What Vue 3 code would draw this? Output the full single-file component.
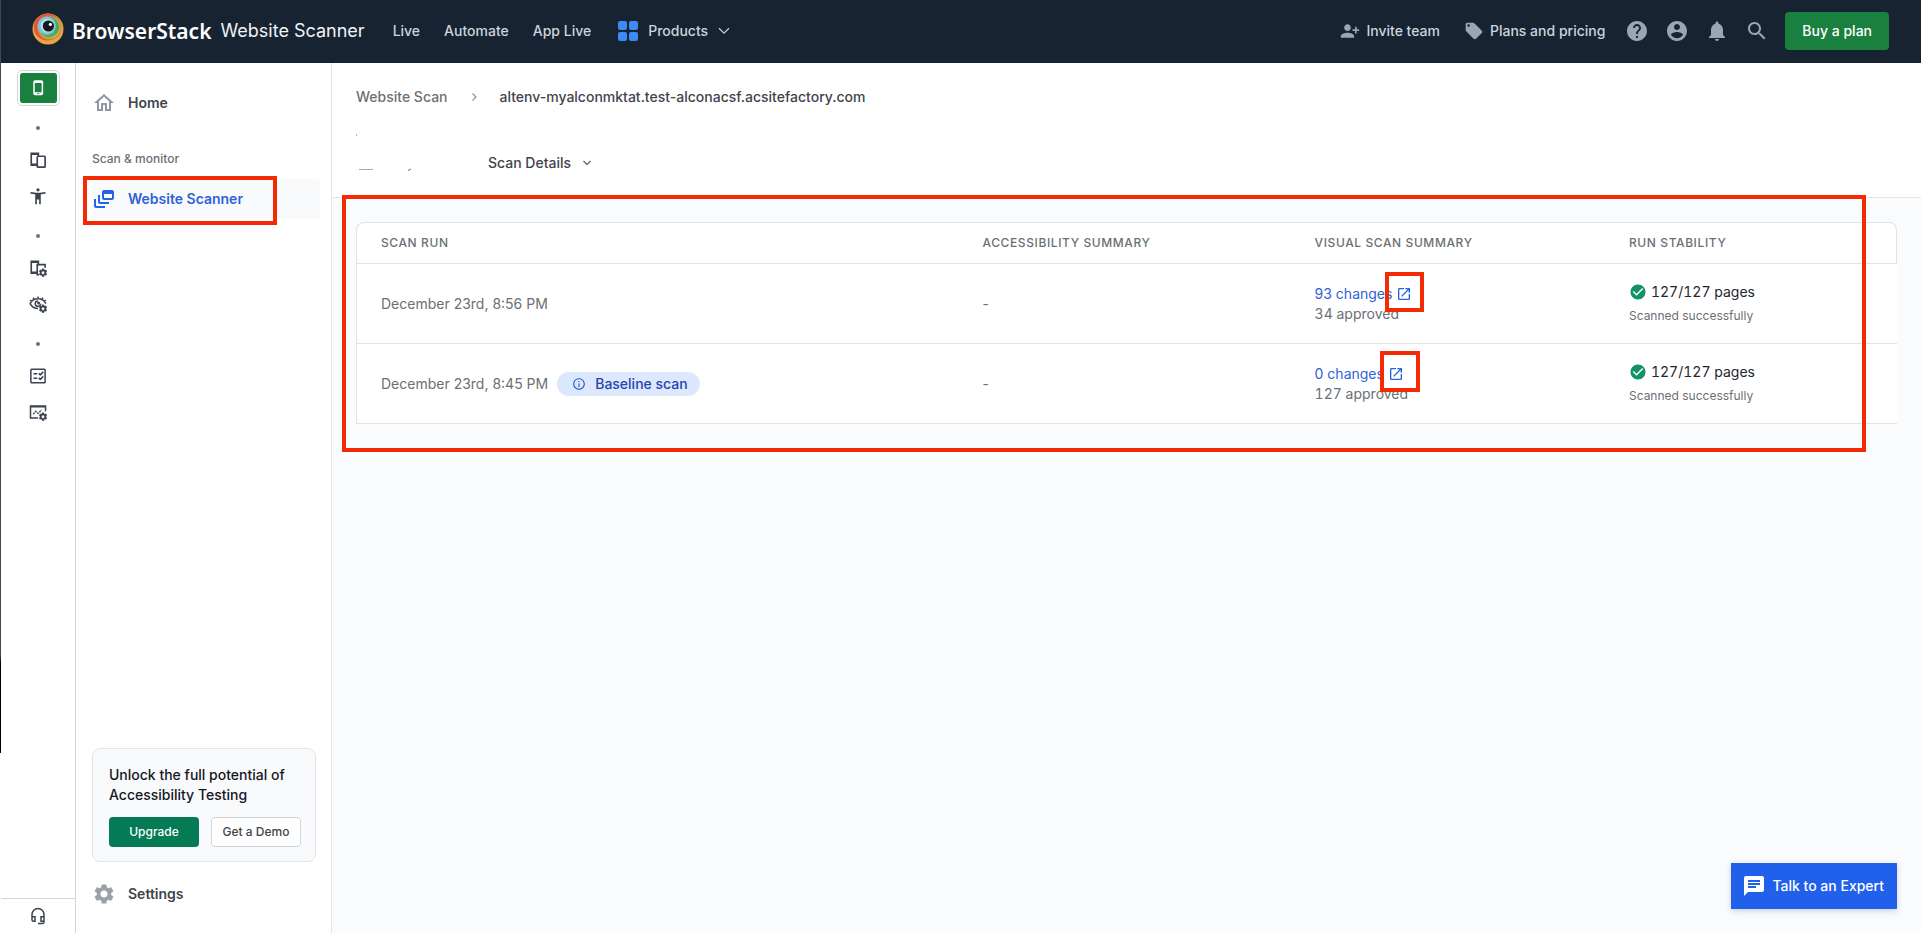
<script setup>
const paths = {
  invite: 'M13 8c0-2.21-1.79-4-4-4S5 5.79 5 8s1.79 4 4 4 4-1.79 4-4zm2 2v2h3v3h2v-3h3v-2h-3V7h-2v3h-3zM1 18v2h16v-2c0-2.66-5.33-4-8-4s-8 1.34-8 4z',
  tag: 'M21.41 11.58l-9-9C12.05 2.22 11.55 2 11 2H4c-1.1 0-2 .9-2 2v7c0 .55.22 1.05.59 1.42l9 9c.36.36.86.58 1.41.58.55 0 1.05-.22 1.41-.59l7-7c.37-.36.59-.86.59-1.41 0-.55-.23-1.06-.59-1.42zM5.5 7C4.67 7 4 6.33 4 5.5S4.67 4 5.5 4 7 4.67 7 5.5 6.33 7 5.5 7z',
  help: 'M12 2C6.48 2 2 6.48 2 12s4.48 10 10 10 10-4.48 10-10S17.52 2 12 2zm1 17h-2v-2h2v2zm2.07-7.75l-.9.92C13.45 12.9 13 13.5 13 15h-2v-.5c0-1.1.45-2.1 1.17-2.83l1.24-1.26c.37-.36.59-.86.59-1.41 0-1.1-.9-2-2-2s-2 .9-2 2H8c0-2.21 1.79-4 4-4s4 1.79 4 4c0 .88-.36 1.68-.93 2.25z',
  account: 'M12 2C6.48 2 2 6.48 2 12s4.48 10 10 10 10-4.48 10-10S17.52 2 12 2zm0 3c1.66 0 3 1.34 3 3s-1.34 3-3 3-3-1.34-3-3 1.34-3 3-3zm0 14.2c-2.5 0-4.71-1.28-6-3.22.03-1.99 4-3.08 6-3.08 1.99 0 5.97 1.09 6 3.08-1.29 1.94-3.5 3.22-6 3.22z',
  bell: 'M12 22c1.1 0 2-.9 2-2h-4c0 1.1.89 2 2 2zm6-6v-5c0-3.07-1.64-5.64-4.5-6.32V4c0-.83-.67-1.5-1.5-1.5s-1.5.67-1.5 1.5v.68C7.63 5.36 6 7.92 6 11v5l-2 2v1h16v-1l-2-2z',
  search: 'M15.5 14h-.79l-.28-.27C15.41 12.59 16 11.11 16 9.5 16 5.91 13.09 3 9.5 3S3 5.91 3 9.5 5.91 16 9.5 16c1.61 0 3.09-.59 4.23-1.57l.27.28v.79l5 4.99L20.49 19l-4.99-5zm-6 0C7.01 14 5 11.99 5 9.5S7.01 5 9.5 5 14 7.01 14 9.5 11.99 14 9.5 14z',
  check: 'M12 2C6.48 2 2 6.48 2 12s4.48 10 10 10 10-4.48 10-10S17.52 2 12 2zm-2 15l-5-5 1.41-1.41L10 14.17l7.59-7.59L19 8l-9 9z',
  gear: 'M19.14 12.94c.04-.3.06-.61.06-.94 0-.32-.02-.64-.07-.94l2.03-1.58c.18-.14.23-.41.12-.61l-1.92-3.32c-.12-.22-.37-.29-.59-.22l-2.39.96c-.5-.38-1.03-.7-1.62-.94l-.36-2.54c-.04-.24-.24-.41-.48-.41h-3.84c-.24 0-.43.17-.47.41l-.36 2.54c-.59.24-1.13.57-1.62.94l-2.39-.96c-.22-.08-.47 0-.59.22L2.74 8.87c-.12.21-.08.47.12.61l2.03 1.58c-.05.3-.09.63-.09.94s.02.64.07.94l-2.03 1.58c-.18.14-.23.41-.12.61l1.92 3.32c.12.22.37.29.59.22l2.39-.96c.5.38 1.03.7 1.62.94l.36 2.54c.05.24.24.41.48.41h3.84c.24 0 .44-.17.47-.41l.36-2.54c.59-.24 1.13-.56 1.62-.94l2.39.96c.22.08.47 0 .59-.22l1.92-3.32c.12-.22.07-.47-.12-.61l-2.01-1.58zM12 15.6c-1.98 0-3.6-1.62-3.6-3.6s1.62-3.6 3.6-3.6 3.6 1.62 3.6 3.6-1.62 3.6-3.6 3.6z',
}
const gearSmall = 'translate(12 11.5) scale(.56)'
const links = ['Live', 'Automate', 'App Live']
const tools = [
  { name: 'Help', icon: 'help' },
  { name: 'Account', icon: 'account' },
  { name: 'Notifications', icon: 'bell' },
  { name: 'Search', icon: 'search' },
]
const railGroups = [
  [{ name: 'Live devices', icon: 'devices' }, { name: 'Accessibility', icon: 'person' }],
  [{ name: 'App automation', icon: 'devicesGear' }, { name: 'Visual testing', icon: 'eyeGear' }],
  [{ name: 'Test management', icon: 'list' }, { name: 'Observability', icon: 'chartGear' }],
]
const runs = [
  { date: 'December 23rd, 8:56 PM', baseline: false, changes: '93 changes', approved: '34 approved', mark: 'mark-a' },
  { date: 'December 23rd, 8:45 PM', baseline: true, changes: '0 changes', approved: '127 approved', mark: 'mark-b' },
]
</script>

<template>
  <div class="page">
    <header class="topbar">
      <a class="brand" href="#">
        <svg class="logo" viewBox="0 0 32 32" aria-hidden="true">
          <circle cx="16" cy="16" r="15.5" fill="#e8a548" />
          <circle cx="15.4" cy="14" r="13.6" fill="#dc5a3c" />
          <circle cx="17.2" cy="14.8" r="12.2" fill="#e9763f" />
          <circle cx="17.4" cy="14.6" r="11" fill="#b7c44c" />
          <circle cx="17" cy="14" r="10.4" fill="#55a85a" />
          <circle cx="14.8" cy="12.8" r="9.2" fill="#7cc4dc" />
          <circle cx="15.4" cy="12.8" r="7" fill="#b4dce6" />
          <circle cx="16.4" cy="13" r="5.6" fill="#17181d" />
          <circle cx="18.4" cy="11.4" r="1.6" fill="#fff" />
        </svg>
        <span class="brand-name">BrowserStack</span>
        <span class="brand-product">Website Scanner</span>
      </a>
      <nav class="links">
        <a v-for="l in links" :key="l" href="#">{{ l }}</a>
        <button class="products" type="button">
          <svg width="20" height="20" viewBox="0 0 20 20" fill="#3b8af5" aria-hidden="true">
            <rect width="9" height="9" rx="2" /><rect x="11" width="9" height="9" rx="2" />
            <rect y="11" width="9" height="9" rx="2" /><rect x="11" y="11" width="9" height="9" rx="2" />
          </svg>
          <span>Products</span>
          <svg width="12" height="12" viewBox="0 0 12 12" fill="none" stroke="#c3cad4" stroke-width="1.3" aria-hidden="true"><path d="M1 3.2l5 5 5-5" /></svg>
        </button>
      </nav>
      <div class="actions">
        <a class="invite" href="#"><svg class="i20" viewBox="0 0 24 24"><path :d="paths.invite" /></svg>Invite team</a>
        <a class="plans" href="#"><svg class="i20" viewBox="0 0 24 24"><path :d="paths.tag" /></svg>Plans and pricing</a>
        <div class="tools">
          <button v-for="t in tools" :key="t.name" type="button" :aria-label="t.name">
            <svg class="i24" viewBox="0 0 24 24"><path :d="paths[t.icon]" /></svg>
          </button>
        </div>
        <button class="buy" type="button">Buy a plan</button>
      </div>
    </header>

    <div class="body">
      <aside class="rail">
        <button class="rail-active" type="button" aria-label="Devices">
          <svg width="20" height="20" viewBox="0 0 20 20" fill="none" stroke="#fff" aria-hidden="true">
            <rect x="6" y="3" width="8.4" height="13.6" rx="1" stroke-width="1.5" /><path d="M6 4h8.4M6 15.4h8.4" stroke-width="2.2" />
            <path d="M9.4 15.6h1.8" stroke="#1a8040" />
          </svg>
        </button>
        <div v-for="(g, n) in railGroups" :key="n" class="rail-group">
          <span class="dot"></span>
          <button v-for="r in g" :key="r.name" type="button" :aria-label="r.name">
            <svg class="i18" viewBox="0 0 24 24" aria-hidden="true">
              <template v-if="r.icon === 'devices'">
                <g fill="none" stroke="currentColor" stroke-width="2.2">
                  <path d="M10.5 19H3V3h9.5v4M3 4.2h9.5M3 17.8h7.5" /><rect x="11" y="7" width="10.5" height="14.5" rx="1" />
                </g>
              </template>
              <path v-else-if="r.icon === 'person'" d="M12 1.5a2.2 2.2 0 1 1 0 4.4 2.2 2.2 0 0 1 0-4.4zM2.2 6.7C5 7.4 9 7.7 12 7.7s7-.3 9.8-1l.5 2c-2 .5-4.7.9-6.6 1.1V23h-2.2v-6.5h-3V23H8.3V9.8c-1.9-.2-4.6-.6-6.6-1.1z" />
              <template v-else-if="r.icon === 'devicesGear'">
                <g fill="none" stroke="currentColor" stroke-width="2.2">
                  <path d="M10.5 19H3V3h9.5v4M3 4.2h9.5M3 17.8h7.5M13.5 21H11V7.5h10.5v4" />
                </g>
                <g :transform="gearSmall"><path :d="paths.gear" stroke="currentColor" stroke-width=".6" /></g>
              </template>
              <template v-else-if="r.icon === 'eyeGear'">
                <g fill="none" stroke="currentColor" stroke-width="2">
                  <path d="M12 18C7 18 3.5 15.5 1.5 11.5 3.5 7.5 7 5 12 5s8.5 2.5 10.5 6.5M12 5V2M7 6.2L5.5 3.6M3.8 8.6L1.5 6.8M17 6.2l1.5-2.6M20.2 8.6l2.3-1.8" />
                  <path d="M15.5 11.5a3.6 3.6 0 1 1-3.6-3.6" />
                </g>
                <circle cx="12.8" cy="10.8" r="2" />
                <g :transform="gearSmall"><path :d="paths.gear" stroke="currentColor" stroke-width=".6" /></g>
              </template>
              <template v-else-if="r.icon === 'list'">
                <g fill="none" stroke="currentColor" stroke-width="2">
                  <rect x="2.5" y="3" width="19" height="18" rx="1" />
                  <path d="M6 9h5M6 15h5M13 8.5l2 2 4-4M13 14.5l2 2 4-4" />
                </g>
              </template>
              <template v-else>
                <g fill="none" stroke="currentColor" stroke-width="2">
                  <path d="M12 20H2V4h20v7M2 5h20" />
                  <path d="M5.5 15l3.5-4 3 3 5-5" stroke-width="1.6" stroke-dasharray="3 1" />
                </g>
                <g :transform="gearSmall"><path :d="paths.gear" stroke="currentColor" stroke-width=".6" /></g>
              </template>
            </svg>
          </button>
        </div>
        <button class="support" type="button" aria-label="Support">
          <svg class="i18" viewBox="0 0 24 24" fill-rule="evenodd" aria-hidden="true"><path d="M12 1a9 9 0 0 0-9 9v7a3 3 0 0 0 3 3h3v-8H5v-2a7 7 0 0 1 14 0v2h-4v8h4v1h-7v2h6a3 3 0 0 0 3-3V10a9 9 0 0 0-9-9zM5 14h2v4H6a1 1 0 0 1-1-1zM17 14h2v4h-2z" /></svg>
        </button>
      </aside>

      <aside class="sidebar">
        <a class="item" href="#">
          <svg class="i24" viewBox="0 0 24 24" fill="#9299a3" aria-hidden="true"><path d="M12 5.69l5 4.5V18h-2v-6H9v6H7v-7.81l5-4.5M12 3L2 12h3v8h6v-6h2v6h6v-8h3L12 3z" /></svg>
          <span>Home</span>
        </a>
        <h2>Scan &amp; monitor</h2>
        <a class="item current" href="#">
          <svg class="i24" viewBox="0 0 24 24" fill="#2563eb" aria-hidden="true"><path d="M8 8H6v7c0 1.1.9 2 2 2h9v-2H8V8zM20 3h-8c-1.1 0-2 .9-2 2v6c0 1.1.9 2 2 2h8c1.1 0 2-.9 2-2V5c0-1.1-.9-2-2-2zm0 8h-8V7h8v4zM4 12H2v7c0 1.1.9 2 2 2h9v-2H4v-7z" /></svg>
          <span>Website Scanner</span>
          <i class="mark mark-nav"></i>
        </a>
        <section class="promo">
          <p>Unlock the full potential of Accessibility Testing</p>
          <div class="promo-buttons">
            <button class="upgrade" type="button">Upgrade</button>
            <button class="demo" type="button">Get a Demo</button>
          </div>
        </section>
        <a class="item" href="#">
          <svg class="i24" viewBox="0 0 24 24" fill="#9ca1a9" aria-hidden="true"><path :d="paths.gear" /></svg>
          <span>Settings</span>
        </a>
      </aside>

      <main class="main">
        <div class="heading">
          <nav class="crumbs">
            <a href="#">Website Scan</a>
            <svg width="12" height="12" viewBox="0 0 12 12" fill="none" stroke="#9299a3" stroke-width="1.3" aria-hidden="true"><path d="M4.5 2.5L8 6l-3.5 3.5" /></svg>
            <span>altenv-myalconmktat.test-alconacsf.acsitefactory.com</span>
          </nav>
          <div class="tabs">
            <svg class="trace" viewBox="0 0 132 64" aria-hidden="true">
              <path d="M.5 3v2" stroke="#b5b8bd" /><path d="M3 38.5h14" stroke="#a9adb3" /><path d="M55 38l-3 1.5" stroke="#6b7280" />
            </svg>
            <button type="button">
              Scan Details
              <svg width="12" height="12" viewBox="0 0 12 12" fill="none" stroke="#6b7280" stroke-width="1.5" aria-hidden="true"><path d="M2.5 4L6 7.5 9.5 4" /></svg>
            </button>
          </div>
        </div>
        <div class="results">
          <table>
            <colgroup><col class="c1" /><col class="c2" /><col class="c3" /><col class="c4" /></colgroup>
            <thead>
              <tr><th>SCAN RUN</th><th>ACCESSIBILITY SUMMARY</th><th>VISUAL SCAN SUMMARY</th><th>RUN STABILITY</th></tr>
            </thead>
            <tbody>
              <tr v-for="r in runs" :key="r.date">
                <td>
                  <div class="run">
                    <span>{{ r.date }}</span>
                    <span v-if="r.baseline" class="badge">
                      <svg width="14" height="14" viewBox="0 0 24 24" fill="#2b55d9" aria-hidden="true"><path d="M11 7h2v2h-2zm0 4h2v6h-2zm1-9C6.48 2 2 6.48 2 12s4.48 10 10 10 10-4.48 10-10S17.52 2 12 2zm0 18c-4.41 0-8-3.59-8-8s3.59-8 8-8 8 3.59 8 8-3.59 8-8 8z" /></svg>
                      Baseline scan
                    </span>
                  </div>
                </td>
                <td>-</td>
                <td>
                  <a class="changes" href="#">{{ r.changes }}
                    <span class="open">
                      <svg width="16" height="16" viewBox="0 0 24 24" fill="#2563eb" aria-hidden="true"><path d="M19 19H5V5h7V3H5c-1.11 0-2 .9-2 2v14c0 1.1.89 2 2 2h14c1.1 0 2-.9 2-2v-7h-2v7zM14 3v2h3.59l-9.83 9.83 1.41 1.41L19 6.41V10h2V3h-7z" /></svg>
                      <i class="mark" :class="r.mark"></i>
                    </span>
                  </a>
                  <div class="approved">{{ r.approved }}</div>
                </td>
                <td>
                  <div class="pages"><svg width="18" height="18" viewBox="0 0 24 24" fill="#0f9467" aria-hidden="true"><path :d="paths.check" /></svg>127/127 pages</div>
                  <div class="note">Scanned successfully</div>
                </td>
              </tr>
            </tbody>
          </table>
          <i class="mark mark-table"></i>
        </div>
      </main>
    </div>

    <button class="talk" type="button">
      <svg class="i24" viewBox="0 0 24 24" fill="#fff" aria-hidden="true"><path d="M20 2H4c-1.1 0-1.99.9-1.99 2L2 22l4-4h14c1.1 0 2-.9 2-2V4c0-1.1-.9-2-2-2zM6 9h12v2H6V9zm8 5H6v-2h8v2zm4-6H6V6h12v2z" /></svg>
      Talk to an Expert
    </button>
    <div class="edge"></div>
  </div>
</template>

<style>
body { margin: 0; }
</style>

<style scoped>
* { box-sizing: border-box; }
.page {
  position: relative;
  display: flex;
  flex-direction: column;
  min-height: 100vh;
  background: #fff;
  color: #6b7075;
  font: 14px/20px Inter, "Liberation Sans", sans-serif;
}
a { color: inherit; text-decoration: none; }
button { font: inherit; color: inherit; background: none; border: 0; padding: 0; display: flex; align-items: center; justify-content: center; }
svg { display: block; flex: none; }
.i18 { width: 18px; height: 18px; }
.i20 { width: 20px; height: 20px; }
.i24 { width: 24px; height: 24px; }

.topbar { display: flex; align-items: center; height: 63px; padding: 0 32px 1px; background: #172331; color: #ccd3dc; font-weight: 500; }
.brand { display: flex; align-items: center; margin-right: 28px; }
.logo { width: 32px; height: 32px; margin: 0 8px 4px 0; }
.brand-name { margin-right: 9px; color: #fff; font: 600 21px/28px "Noto Sans", sans-serif; }
.brand-product { color: #f1f4f7; font-size: 18px; line-height: 28px; font-weight: 400; }
.links { display: flex; align-items: center; gap: 24px; }
.products { gap: 10px; margin-left: 3px; }
.actions { display: flex; align-items: center; margin-left: auto; }
.actions svg { fill: #9ba6b5; }
.invite, .plans { display: flex; align-items: center; gap: 6px; margin-right: 24px; }
.tools { display: flex; gap: 16px; margin-right: 16px; margin-left: -4px; }
.buy { height: 38px; padding: 0 17px; border-radius: 4px; background: #1a8040; color: #fff; }

.body { display: flex; flex: 1; }
.rail { display: flex; flex-direction: column; align-items: center; width: 76px; padding: 7px 0 0 1px; border-right: 1px solid #d3d5d9; color: #3c4250; }
.rail svg { fill: currentColor; }
.rail .rail-active svg { fill: none; }
.rail-active { width: 43px; height: 36px; margin-bottom: 8px; border: 1px solid #d3d5d9; border-radius: 5px; padding: 2px; background: #1a8040 content-box; box-shadow: inset 0 0 0 2px #fff; }
.rail-group { display: flex; flex-direction: column; align-items: center; margin-bottom: 8px; }
.rail-group button { width: 36px; height: 36px; }
.dot { width: 4px; height: 4px; margin: 12px 0; border-radius: 50%; background: #6b7280; }
.support { width: 100%; height: 35px; margin-top: auto; border-top: 1px solid #d3d5d9; }

.sidebar { display: flex; flex-direction: column; width: 256px; padding: 20px 15px 19px 16px; border-right: 1px solid #e3e5e8; }
.item { position: relative; display: flex; align-items: center; gap: 12px; height: 40px; margin-right: -4px; border-radius: 4px; color: #3f444c; font-weight: 600; }
.sidebar h2 { margin: 26px 0 10px; font-size: 12px; line-height: 20px; font-weight: 500; color: #6b7075; }
.current { background: #f9fafc; color: #2f62d9; }
.promo { margin-top: auto; margin-bottom: 12px; padding: 16px 14px 14px 16px; border: 1px solid #e3e6e9; border-radius: 8px; background: #f9fafc; }
.promo p { margin: 0 0 12px; color: #14181f; font-weight: 500; }
.promo-buttons { display: grid; grid-template-columns: 1fr 1fr; gap: 12px; font-size: 12px; font-weight: 500; }
.promo-buttons button { height: 30px; border-radius: 4px; }
.upgrade { background: #047a55; color: #fff; }
.promo-buttons .demo { border: 1px solid #d1d4d9; background: #fff; color: #3f444c; }

.main { flex: 1; min-width: 0; background: #fafbfd; }
.heading { padding: 24px 24px 2px; background: #fff; border-bottom: 1px solid #e3e5e8; }
.crumbs { display: flex; align-items: center; gap: 20px; font-weight: 500; }
.crumbs span { color: #3f444c; }
.tabs { display: flex; align-items: center; margin-top: 24px; height: 64px; }
.trace { width: 132px; height: 64px; }
.tabs button { gap: 10px; color: #3f444c; font-weight: 500; }
.results { position: relative; padding: 24px; }
table { width: 100%; table-layout: fixed; border-collapse: separate; border-spacing: 0; text-align: left; }
.c1 { width: 39.1%; } .c2 { width: 21.55%; } .c3 { width: 20.4%; } .c4 { width: 18.95%; }
th { height: 42px; padding: 0 24px; border: solid #e0e3e6; border-width: 1px 0; background: #fff; font-size: 12px; font-weight: 500; letter-spacing: .05em; }
th:first-child { border-left-width: 1px; border-top-left-radius: 8px; }
th:last-child { border-right-width: 1px; border-top-right-radius: 8px; }
td { height: 80px; padding: 0 24px; border-bottom: 1px solid #e0e3e6; background: #fff; }
td:first-child { border-left: 1px solid #e0e3e6; }
.run { display: flex; align-items: center; gap: 9px; }
.badge { display: flex; align-items: center; gap: 9px; height: 24px; padding: 0 12px 0 15px; border-radius: 12px; background: #dce9fd; color: #2743b0; font-weight: 500; }
.changes { display: flex; align-items: center; gap: 4px; color: #2f62d9; }
.approved, .pages { font-variant-numeric: tabular-nums; }
.open { position: relative; }
.pages { display: flex; align-items: center; gap: 4px; height: 24px; color: #22262d; }
.note { font-size: 12px; height: 24px; line-height: 24px; }

.mark { position: absolute; border: 4px solid #f32b05; pointer-events: none; }
.mark-nav { left: -9px; top: -3px; width: 194px; height: 49px; }
.mark-a { left: -11px; top: -14px; width: 39px; height: 40px; }
.mark-b { left: -8px; top: -15px; width: 40px; height: 41px; }
.mark-table { left: 10px; right: 55px; top: -3px; bottom: -4px; }

.talk { position: absolute; right: 24px; bottom: 24px; height: 46px; padding: 0 13px 0 11px; gap: 6px; background: #2160ea; color: #fff; font-weight: 500; box-shadow: 0 2px 6px rgba(20, 40, 80, .2); }
.edge { position: absolute; left: 0; top: 0; bottom: 180px; width: 1px; background: linear-gradient(#45474d 87%, #000 88%); }
</style>
